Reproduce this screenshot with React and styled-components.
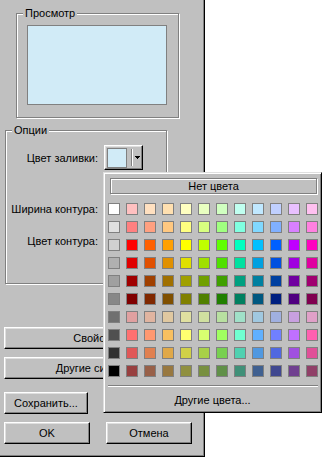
import * as React from 'react';
import styled, { createGlobalStyle } from 'styled-components';

const GlobalStyle = createGlobalStyle`
  body {
    margin: 0;
    background: #fff;
    font-family: "Liberation Sans", Arial, sans-serif;
    font-size: 11px;
    color: #000;
  }
`;

const PALETTE = [
  ['#ffffff', '#ffc0c0', '#ffe0c0', '#ffe0b0', '#ffffc0', '#e8ffc0', '#d0ffc0', '#c0fff0', '#c0e8ff', '#c0d0ff', '#e8c0ff', '#ffc0f0'],
  ['#e0e0e0', '#ff8080', '#ffa080', '#ffc880', '#ffff80', '#d8ff80', '#a0ff80', '#80ffe0', '#80d8ff', '#80b0ff', '#d880ff', '#ff80e0'],
  ['#d0d0d0', '#ff0000', '#ff6000', '#ffa000', '#ffff00', '#c0ff00', '#60ff00', '#00ffc0', '#00c0ff', '#0060ff', '#c000ff', '#ff00c0'],
  ['#b0b0b0', '#e00000', '#e05000', '#e09000', '#e0e000', '#a0e000', '#50e000', '#00e0a0', '#00a0e0', '#0050e0', '#a000e0', '#e000a0'],
  ['#a0a0a0', '#a00000', '#a04000', '#a07000', '#a0a000', '#70a000', '#40a000', '#00a080', '#0080a0', '#0040a0', '#7000a0', '#a00070'],
  ['#888888', '#800000', '#802800', '#805000', '#808000', '#508000', '#208000', '#008060', '#005880', '#002080', '#500080', '#800050'],
  ['#707070', '#e0a0a0', '#e0b4a0', '#e0c8a0', '#e0e0a0', '#d0e0a0', '#b8e0a0', '#a0e0c8', '#a0c8e0', '#a0b0e0', '#c8a0e0', '#e0a0c8'],
  ['#505050', '#ff7070', '#ff9870', '#f8c060', '#ffff70', '#d8ff70', '#a0ff60', '#70ffd0', '#60b0ff', '#7080ff', '#c070ff', '#ff60b0'],
  ['#303030', '#e05858', '#e08050', '#e0a848', '#d0d048', '#a8d048', '#78d050', '#50d0b0', '#5098e0', '#5068e0', '#a050e0', '#e05098'],
  ['#000000', '#984040', '#986048', '#987840', '#909040', '#789040', '#609048', '#409078', '#406090', '#404890', '#704090', '#904068'],
];

const Dialog = styled.div`
  position: relative;
  width: 205px;
  height: 457px;
  box-sizing: border-box;
  background: #c0c0c0;
  border-right: 1px solid #000;
  border-bottom: 1px solid #000;
  box-shadow: inset -1px -1px 0 #808080;
  padding-top: 13px;
  display: flex;
  flex-direction: column;
  align-items: flex-start;
`;

const Group = styled.div`
  box-sizing: border-box;
  flex-shrink: 0;
  width: ${(p) => p.$w}px;
  height: ${(p) => p.$h}px;
  margin-left: ${(p) => p.$left}px;
  margin-top: ${(p) => p.$top}px;
  border: 1px solid #808080;
  box-shadow: 1px 1px 0 #fff, inset 1px 1px 0 #fff;
`;

const Caption = styled.div`
  width: fit-content;
  height: 13px;
  line-height: 13px;
  margin: -7px 0 0 6px;
  padding: 0 2px;
  background: #c0c0c0;
`;

const PreviewBox = styled.div`
  box-sizing: border-box;
  width: 140px;
  height: 80px;
  margin: 5px 0 0 10px;
  border: 1px solid #808080;
  background: #d1ebf7;
`;

const Row = styled.div`
  display: flex;
  align-items: center;
  height: 25px;
  margin-top: ${(p) => p.$top}px;
`;

const Label = styled.div`
  width: 92px;
  flex-shrink: 0;
  text-align: right;
  margin-right: 6px;
  white-space: nowrap;
`;

const ColorButton = styled.div`
  box-sizing: border-box;
  width: 39px;
  height: 25px;
  display: flex;
  align-items: center;
  padding-left: 2px;
  border: 1px solid;
  border-color: #fff #000 #000 #fff;
  box-shadow: inset -1px -1px 0 #808080, inset 1px 1px 0 #dfdfdf;
`;

const ColorChip = styled.div`
  box-sizing: border-box;
  width: 20px;
  height: 20px;
  border: 1px solid #808080;
  background: ${(p) => p.$color};
`;

const Divider = styled.div`
  width: 1px;
  height: 17px;
  margin-left: 4px;
  background: #808080;
  box-shadow: 1px 0 0 #fff;
`;

const Arrow = styled.svg`
  margin-left: 3px;
  display: block;
`;

const NumberInput = styled.div`
  box-sizing: border-box;
  width: 50px;
  height: 21px;
  background: #fff;
  border: 1px solid;
  border-color: #808080 #fff #fff #808080;
  box-shadow: inset 1px 1px 0 #000;
`;

const Button = styled.div`
  box-sizing: border-box;
  flex-shrink: 0;
  width: ${(p) => p.$w}px;
  height: 22px;
  margin-top: ${(p) => p.$top || 0}px;
  margin-left: ${(p) => (p.$left === undefined ? 4 : p.$left)}px;
  display: flex;
  align-items: center;
  justify-content: center;
  white-space: nowrap;
  overflow: hidden;
  background: #c0c0c0;
  border: 1px solid;
  border-color: #fff #000 #000 #fff;
  box-shadow: inset -1px -1px 0 #808080, inset 1px 1px 0 #dfdfdf;
`;

const ButtonRow = styled.div`
  display: flex;
  margin-top: 8px;
`;

const Popup = styled.div`
  position: absolute;
  left: 103px;
  top: 172px;
  width: 219px;
  height: 241px;
  box-sizing: border-box;
  background: #c0c0c0;
  border: 1px solid;
  border-color: #dfdfdf #000 #000 #dfdfdf;
  box-shadow: inset 1px 1px 0 #fff, inset -1px -1px 0 #808080;
  display: flex;
  flex-direction: column;
  align-items: flex-start;
`;

const NoColor = styled.div`
  box-sizing: border-box;
  width: 207px;
  height: 16px;
  margin: 5px 0 0 6px;
  display: flex;
  align-items: center;
  justify-content: center;
  border: 1px solid #808080;
  box-shadow: 1px 1px 0 #fff, inset 1px 1px 0 #fff;
`;

const Grid = styled.div`
  display: grid;
  grid-template-columns: repeat(12, 12px);
  grid-auto-rows: 12px;
  gap: 6px;
  margin: 9px 0 0 4px;
`;

const Swatch = styled.div`
  box-sizing: border-box;
  border: 1px solid #808080;
  background: ${(p) => p.$color};
`;

const Separator = styled.div`
  width: 210px;
  height: 0;
  margin: 8px 0 0 4px;
  border-top: 1px solid #808080;
  border-bottom: 1px solid #fff;
`;

const MoreColors = styled.div`
  flex: 1;
  align-self: stretch;
  display: flex;
  align-items: center;
  justify-content: center;
`;

const DropArrow = () => (
  <Arrow width="5" height="3" viewBox="0 0 5 3">
    <rect x="0" y="0" width="5" height="1" fill="#000" />
    <rect x="1" y="1" width="3" height="1" fill="#000" />
    <rect x="2" y="2" width="1" height="1" fill="#000" />
  </Arrow>
);

const ColorPicker = ({ color }) => (
  <ColorButton>
    <ColorChip $color={color} />
    <Divider />
    <DropArrow />
  </ColorButton>
);

export default function App() {
  return (
    <>
      <GlobalStyle />
      <Dialog>
        <Group $left={16} $top={0} $w={163} $h={105}>
          <Caption>Просмотр</Caption>
          <PreviewBox />
        </Group>

        <Group $left={5} $top={12} $w={162} $h={154}>
          <Caption>Опции</Caption>
          <Row $top={8}>
            <Label>Цвет заливки:</Label>
            <ColorPicker color="#d1ebf7" />
          </Row>
          <Row $top={26}>
            <Label>Ширина контура:</Label>
            <NumberInput />
          </Row>
          <Row $top={7}>
            <Label>Цвет контура:</Label>
            <ColorPicker color="#000000" />
          </Row>
        </Group>

        <Button $w={196} $top={43}>Свойства...</Button>
        <Button $w={196} $top={8}>Другие символы...</Button>
        <Button $w={84} $top={13}>Сохранить...</Button>
        <ButtonRow>
          <Button $w={86}>OK</Button>
          <Button $w={86} $left={16}>Отмена</Button>
        </ButtonRow>

        <Popup>
          <NoColor>Нет цвета</NoColor>
          <Grid>
            {PALETTE.flat().map((c, i) => (
              <Swatch key={i} $color={c} />
            ))}
          </Grid>
          <Separator />
          <MoreColors>Другие цвета...</MoreColors>
        </Popup>
      </Dialog>
    </>
  );
}
